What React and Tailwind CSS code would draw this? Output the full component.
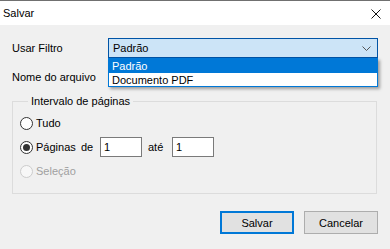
import React from 'react';

function Radio({ checked, disabled, label }) {
  return (
    <div className="flex items-center h-[24px]">
      <span
        className={`w-[13px] h-[13px] rounded-full border flex items-center justify-center shrink-0 ${
          disabled ? 'border-[#cccccc] bg-[#f7f7f7]' : 'border-[#333333] bg-white'
        }`}
      >
        {checked && <span className="w-[7px] h-[7px] rounded-full bg-[#333333]" />}
      </span>
      <span className={`ml-[3px] ${disabled ? 'text-[#a0a0a0]' : 'text-black'}`}>{label}</span>
    </div>
  );
}

export default function App() {
  return (
    <div className="w-[390px] h-[249px] bg-[#f0f0f0] text-[11px] leading-[14px] text-black font-['Liberation_Sans',Arial,sans-serif] overflow-hidden">
      <div className="h-[25px] bg-white border-t border-[#707070] flex items-center justify-between pl-[3px] pr-[9px]">
        <span>Salvar</span>
        <svg width="10" height="10" viewBox="0 0 10 10" className="mt-[1px]">
          <path d="M0.5 0.5 L9.5 9.5 M9.5 0.5 L0.5 9.5" stroke="#111" strokeWidth="1" fill="none" />
        </svg>
      </div>

      <div className="px-[12px]">
        <div className="flex items-center mt-[13px] h-[20px]">
          <span className="w-[96px]">Usar Filtro</span>
          <div className="relative w-[270px]">
            <div className="h-[20px] border border-[#0054a6] bg-[#cce4f7] flex items-center justify-between pl-[4px] pr-[6px]">
              <span>Padrão</span>
              <svg width="9" height="5" viewBox="0 0 9 5">
                <path d="M0.5 0.5 L4.5 4.5 L8.5 0.5" stroke="#555" strokeWidth="1" fill="none" />
              </svg>
            </div>
            <div className="absolute left-0 top-full w-[270px] z-10 border border-[#0078d7] bg-white shadow-[2px_2px_3px_rgba(0,0,0,0.35)]">
              <div className="h-[14px] bg-[#0078d7] text-white pl-[3px] flex items-center">Padrão</div>
              <div className="h-[13px] pl-[3px] flex items-center">Documento PDF</div>
            </div>
          </div>
        </div>

        <div className="flex items-center mt-[9px] h-[20px]">
          <span className="w-[96px]">Nome do arquivo</span>
          <div className="w-[270px] h-[20px] border border-[#7a7a7a] bg-white" />
        </div>

        <fieldset className="mt-[7px] w-[365px] border border-[#dcdcdc] pl-[7px] pt-[3px] pb-[10px]">
          <legend className="ml-[8px] px-[3px]">Intervalo de páginas</legend>
          <Radio label="Tudo" />
          <div className="flex items-center h-[24px]">
            <span className="w-[13px] h-[13px] rounded-full border border-[#333333] bg-white flex items-center justify-center shrink-0">
              <span className="w-[7px] h-[7px] rounded-full bg-[#333333]" />
            </span>
            <span className="ml-[3px] w-[45px]">Páginas</span>
            <span className="w-[19px]">de</span>
            <div className="w-[42px] h-[20px] border border-[#7a7a7a] bg-white pl-[3px] flex items-center">1</div>
            <span className="ml-[6px] w-[24px]">até</span>
            <div className="w-[42px] h-[20px] border border-[#7a7a7a] bg-white pl-[3px] flex items-center">1</div>
          </div>
          <Radio label="Seleção" disabled />
        </fieldset>

        <div className="flex justify-end gap-[10px] mt-[17px]">
          <button className="w-[74px] h-[23px] bg-[#e1e1e1] border-2 border-[#0078d7] text-black">Salvar</button>
          <button className="w-[74px] h-[23px] bg-[#e1e1e1] border border-[#adadad] text-black">Cancelar</button>
        </div>
      </div>
    </div>
  );
}
